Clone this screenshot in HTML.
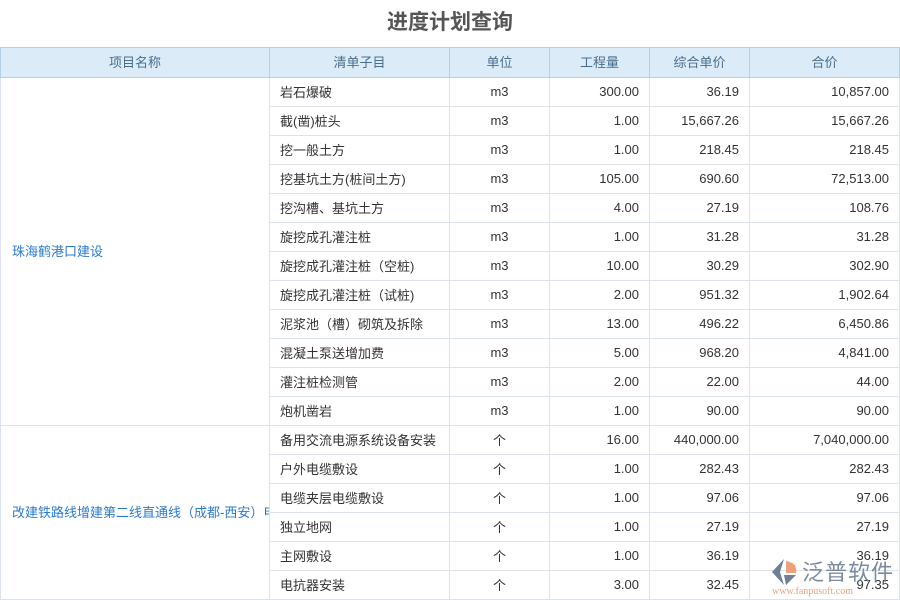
<!DOCTYPE html><html><head><meta charset="utf-8"><style>
body{margin:0;width:900px;height:600px;overflow:hidden;background:#fff;font-family:"Liberation Sans","Noto Sans CJK SC",sans-serif;font-size:13px;color:#333}
h1{margin:0;height:47px;line-height:46px;text-align:center;font-size:21px;color:#555;font-weight:bold}
table{position:absolute;top:47px;left:0;border-collapse:collapse;table-layout:fixed;width:899px}
td,th{border:1px solid #dde3ea;height:26px;padding:0 10px 2px;white-space:nowrap;overflow:hidden;vertical-align:middle}
th{background:#dcebf8;color:#4a6d8c;font-weight:normal;border-color:#b7cfe4;height:27px}
td.n{text-align:right}td.c{text-align:center}
td.p{color:#2d7bc4;padding-left:11px}
.logo{position:absolute;left:768px;top:553px;width:130px;height:47px}
</style></head><body>
<h1>进度计划查询</h1>
<table>
<colgroup><col style="width:269px"><col style="width:180px"><col style="width:100px"><col style="width:100px"><col style="width:100px"><col style="width:150px"></colgroup>
<tr><th>项目名称</th><th>清单子目</th><th>单位</th><th>工程量</th><th>综合单价</th><th>合价</th></tr>
<tr><td class="p" rowspan="12">珠海鹤港口建设</td><td>岩石爆破</td><td class="c">m3</td><td class="n">300.00</td><td class="n">36.19</td><td class="n">10,857.00</td></tr>
<tr><td>截(凿)桩头</td><td class="c">m3</td><td class="n">1.00</td><td class="n">15,667.26</td><td class="n">15,667.26</td></tr>
<tr><td>挖一般土方</td><td class="c">m3</td><td class="n">1.00</td><td class="n">218.45</td><td class="n">218.45</td></tr>
<tr><td>挖基坑土方(桩间土方)</td><td class="c">m3</td><td class="n">105.00</td><td class="n">690.60</td><td class="n">72,513.00</td></tr>
<tr><td>挖沟槽、基坑土方</td><td class="c">m3</td><td class="n">4.00</td><td class="n">27.19</td><td class="n">108.76</td></tr>
<tr><td>旋挖成孔灌注桩</td><td class="c">m3</td><td class="n">1.00</td><td class="n">31.28</td><td class="n">31.28</td></tr>
<tr><td>旋挖成孔灌注桩（空桩)</td><td class="c">m3</td><td class="n">10.00</td><td class="n">30.29</td><td class="n">302.90</td></tr>
<tr><td>旋挖成孔灌注桩（试桩)</td><td class="c">m3</td><td class="n">2.00</td><td class="n">951.32</td><td class="n">1,902.64</td></tr>
<tr><td>泥浆池（槽）砌筑及拆除</td><td class="c">m3</td><td class="n">13.00</td><td class="n">496.22</td><td class="n">6,450.86</td></tr>
<tr><td>混凝土泵送增加费</td><td class="c">m3</td><td class="n">5.00</td><td class="n">968.20</td><td class="n">4,841.00</td></tr>
<tr><td>灌注桩检测管</td><td class="c">m3</td><td class="n">2.00</td><td class="n">22.00</td><td class="n">44.00</td></tr>
<tr><td>炮机凿岩</td><td class="c">m3</td><td class="n">1.00</td><td class="n">90.00</td><td class="n">90.00</td></tr>
<tr><td class="p" rowspan="6" style="padding-right:0">改建铁路线增建第二线直通线（成都-西安）电</td><td>备用交流电源系统设备安装</td><td class="c">个</td><td class="n">16.00</td><td class="n">440,000.00</td><td class="n">7,040,000.00</td></tr>
<tr><td>户外电缆敷设</td><td class="c">个</td><td class="n">1.00</td><td class="n">282.43</td><td class="n">282.43</td></tr>
<tr><td>电缆夹层电缆敷设</td><td class="c">个</td><td class="n">1.00</td><td class="n">97.06</td><td class="n">97.06</td></tr>
<tr><td>独立地网</td><td class="c">个</td><td class="n">1.00</td><td class="n">27.19</td><td class="n">27.19</td></tr>
<tr><td>主网敷设</td><td class="c">个</td><td class="n">1.00</td><td class="n">36.19</td><td class="n">36.19</td></tr>
<tr><td>电抗器安装</td><td class="c">个</td><td class="n">3.00</td><td class="n">32.45</td><td class="n">97.35</td></tr>
</table>
<div class="logo">
<svg width="30" height="30" viewBox="0 0 30 30" style="position:absolute;left:2px;top:4px"><path d="M14 2 L2 15 L14 28 L10 15Z" fill="#6f7f95"/><path d="M16 4 Q28 6 26 16 L16 16Z" fill="#e9a27a"/><path d="M14 18 L26 18 L16 28Z" fill="#6f7f95"/></svg>
<div style="position:absolute;left:34px;top:2px;font-size:22px;color:#6f7f95;letter-spacing:1px;opacity:.9">泛普软件</div>
<div style="position:absolute;left:4px;top:33px;font-size:10px;color:#e9a27a;font-family:'Liberation Serif',serif">www.fanpusoft.com</div>
</div>
</body></html>
